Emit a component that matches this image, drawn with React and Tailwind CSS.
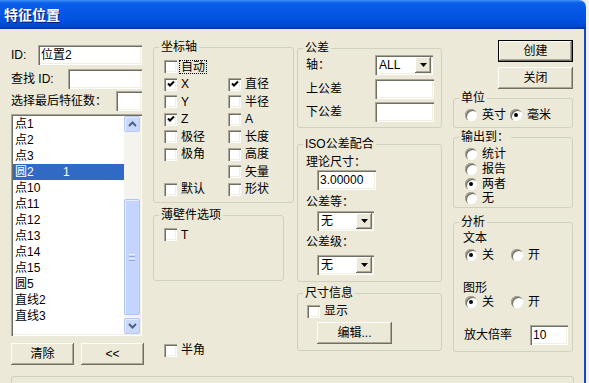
import React from "react";

const sunken =
  "bg-white shadow-[inset_1px_1px_0_#aca899,inset_2px_2px_0_#716f64,inset_-1px_-1px_0_#ffffff,inset_-2px_-2px_0_#f1efe2]";
const raised =
  "bg-[#ece9d8] shadow-[inset_-1px_-1px_0_#716f64,inset_1px_1px_0_#ffffff,inset_-2px_-2px_0_#aca899]";

function Group({ title, className = "", children }) {
  return (
    <fieldset className={`border border-[#d0d0bf] rounded-[3px] ${className}`}>
      <legend className="ml-[5px] px-[2px] leading-[13px]">{title}</legend>
      {children}
    </fieldset>
  );
}

function Check({ checked }) {
  return (
    <span className={`w-[13px] h-[13px] shrink-0 flex items-center justify-center ${sunken}`}>
      {checked && (
        <svg width="8" height="8" viewBox="0 0 8 8">
          <path d="M1 3.5L3 5.5L7 1.5" stroke="#000" strokeWidth="2" fill="none" />
        </svg>
      )}
    </span>
  );
}

function CheckRow({ label, checked, focus, className = "" }) {
  return (
    <div className={`flex items-center h-[17.5px] ${className}`}>
      <Check checked={checked} />
      {label && (
        <span
          className={`ml-[3px] leading-[12px] px-[1px] ${
            focus ? "outline outline-1 outline-dotted outline-black" : ""
          }`}
        >
          {label}
        </span>
      )}
    </div>
  );
}

function Radio({ checked }) {
  return (
    <span className="w-[12px] h-[12px] rounded-full bg-white shrink-0 flex items-center justify-center shadow-[inset_1px_1px_0_#aca899,inset_2px_2px_0_#716f64,inset_-1px_-1px_0_#ffffff]">
      {checked && <span className="w-[4px] h-[4px] rounded-full bg-black" />}
    </span>
  );
}

function RadioItem({ label, checked, className = "" }) {
  return (
    <div className={`flex items-center ${className}`}>
      <Radio checked={checked} />
      <span className="ml-[5px] leading-[14px]">{label}</span>
    </div>
  );
}

function Field({ value = "", className = "" }) {
  return (
    <div className={`h-[20px] flex items-center pl-[3px] ${sunken} ${className}`}>
      <span className="leading-[14px]">{value}</span>
    </div>
  );
}

function Combo({ value, className = "" }) {
  return (
    <div className={`flex items-center h-[20px] p-[2px] ${sunken} ${className}`}>
      <span className="flex-1 pl-[2px] leading-[14px]">{value}</span>
      <span className={`w-[16px] h-full flex items-center justify-center ${raised}`}>
        <svg width="7" height="4" viewBox="0 0 7 4">
          <path d="M0 0H7L3.5 4Z" fill="#000" />
        </svg>
      </span>
    </div>
  );
}

function Button({ children, isDefault, className = "" }) {
  return (
    <div
      className={`flex items-center justify-center h-[22px] ${
        isDefault ? "border border-black" : ""
      } ${raised} ${className}`}
    >
      <span className="leading-[14px]">{children}</span>
    </div>
  );
}

function ScrollBtn({ up }) {
  return (
    <div className="w-[16px] h-[16px] rounded-[2px] border border-[#b7c8f2] bg-[#c9d8fc] flex items-center justify-center shadow-[inset_1px_1px_0_#e4ecfe]">
      <svg width="9" height="6" viewBox="0 0 9 6">
        <path
          d={up ? "M1 5L4.5 1.5L8 5" : "M1 1L4.5 4.5L8 1"}
          stroke="#4d6185"
          strokeWidth="2"
          fill="none"
        />
      </svg>
    </div>
  );
}

const items = ["点1", "点2", "点3", "圆2", "点10", "点11", "点12", "点13", "点14", "点15", "圆5", "直线2", "直线3"];

export default function App() {
  return (
    <div className="w-[589px] h-[383px] flex bg-[#e9e9e9] text-[12px] text-black font-['Liberation_Sans','Noto_Sans_CJK_SC',sans-serif] overflow-hidden">
      <div className="w-[586px] flex flex-col">
        {/* title bar */}
        <div className="h-[29px] rounded-tr-[7px] flex items-center pl-[4px] bg-[linear-gradient(to_bottom,#3d8ff8_0px,#0b5fe9_3px,#0557e4_12px,#0050dd_22px,#0044c8_27px,#00309e_29px)]">
          <span className="text-white font-bold text-[14px] leading-[16px] [text-shadow:1px_1px_0_#0a1b6e]">
            特征位置
          </span>
        </div>

        {/* body */}
        <div className="flex-1 flex flex-col bg-[#ece9d8] border-r-2 border-[#1a47c8]">
          <div className="h-[347px] flex items-start pl-[11px]">
            {/* column 1 */}
            <div className="w-[133px] mt-[16px] flex flex-col">
              <div className="w-[131px] flex items-center h-[20px]">
                <span className="flex-1 leading-[14px]">ID:</span>
                <Field value="位置2" className="w-[104px]" />
              </div>
              <div className="w-[131px] flex items-center h-[20px] mt-[4px]">
                <span className="flex-1 leading-[14px]">查找 ID:</span>
                <Field className="w-[74px]" />
              </div>
              <div className="w-[131px] flex items-center h-[20px] mt-[2px]">
                <span className="flex-1 leading-[14px]">选择最后特征数：</span>
                <Field className="w-[26px]" />
              </div>

              <div className={`w-[131px] h-[222px] mt-[3px] p-[2px] flex ${sunken}`}>
                <div className="flex-1 flex flex-col">
                  {items.map((it, i) => (
                    <div
                      key={it}
                      className={`h-[16px] flex items-center pl-[2px] leading-[14px] ${
                        i === 3 ? "bg-[#316ac5] text-white" : ""
                      }`}
                    >
                      <span className="w-[48px]">{it}</span>
                      {i === 3 && <span>1</span>}
                    </div>
                  ))}
                </div>
                <div className="w-[16px] flex flex-col bg-[#f4f3ee]">
                  <ScrollBtn up />
                  <div className="h-[67px]" />
                  <div className="h-[116px] rounded-[2px] border border-[#b1c5f3] bg-[#c4d4fc] shadow-[inset_1px_1px_0_#e6edfe] flex flex-col items-center justify-center gap-[1px]">
                    <span className="w-[6px] h-[1px] bg-[#eef3fe]" />
                    <span className="w-[6px] h-[1px] bg-[#8faaee]" />
                    <span className="w-[6px] h-[1px] bg-[#eef3fe]" />
                    <span className="w-[6px] h-[1px] bg-[#8faaee]" />
                  </div>
                  <div className="h-[3px]" />
                  <ScrollBtn />
                </div>
              </div>

              <div className="flex mt-[7px] gap-[7px]">
                <Button className="w-[63px]">清除</Button>
                <Button className="w-[63px]">&lt;&lt;</Button>
              </div>
            </div>

            {/* column 2 */}
            <div className="w-[141px] ml-[9px] mt-[12px] flex flex-col">
              <Group title="坐标轴" className="w-[141px] h-[162px]">
                <div className="pt-[4px] pl-[10px] grid grid-cols-[64px_1fr]">
                  <CheckRow label="自动" focus />
                  <div />
                  <CheckRow label="X" checked />
                  <CheckRow label="直径" checked />
                  <CheckRow label="Y" />
                  <CheckRow label="半径" />
                  <CheckRow label="Z" checked />
                  <CheckRow label="A" />
                  <CheckRow label="极径" />
                  <CheckRow label="长度" />
                  <CheckRow label="极角" />
                  <CheckRow label="高度" />
                  <div />
                  <CheckRow label="矢量" />
                  <CheckRow label="默认" />
                  <CheckRow label="形状" />
                </div>
              </Group>
              <Group title="薄壁件选项" className="w-[131px] h-[72px] mt-[6px]">
                <div className="pt-[4px] pl-[10px]">
                  <CheckRow label="T" />
                </div>
              </Group>
              <div className="mt-[60px] pl-[11px] h-[18px] flex items-center">
                <Check />
                <span className="ml-[4px] leading-[14px]">半角</span>
              </div>
            </div>

            {/* column 3 */}
            <div className="w-[145px] ml-[3px] mt-[13px] flex flex-col">
              <Group title="公差" className="w-[145px] h-[86px]">
                <div className="flex items-center h-[19px] pl-[8px]">
                  <span className="w-[69px] leading-[14px]">轴：</span>
                  <Combo value="ALL" className="w-[58px] h-[19px]" />
                </div>
                <div className="flex items-center h-[20px] mt-[5px] pl-[8px]">
                  <span className="w-[69px] leading-[14px]">上公差</span>
                  <Field className="w-[59px]" />
                </div>
                <div className="flex items-center h-[20px] mt-[3px] pl-[8px]">
                  <span className="w-[69px] leading-[14px]">下公差</span>
                  <Field className="w-[59px]" />
                </div>
              </Group>

              <Group title="ISO公差配合" className="w-[145px] h-[144px] mt-[10px]">
                <div className="flex flex-col pt-[4px] pl-[8px]">
                  <span className="leading-[14px]">理论尺寸：</span>
                  <Field value="3.00000" className="w-[59px] ml-[11px] mt-[1px]" />
                  <span className="leading-[14px] mt-[5px]">公差等：</span>
                  <Combo value="无" className="w-[57px] ml-[11px] mt-[2px]" />
                  <span className="leading-[14px] mt-[4px]">公差级：</span>
                  <Combo value="无" className="w-[57px] ml-[11px] mt-[6px]" />
                </div>
              </Group>

              <Group title="尺寸信息" className="w-[145px] h-[64px] mt-[5px]">
                <div className="flex flex-col pt-[4px] pl-[9px]">
                  <div className="flex items-center h-[14px]">
                    <Check />
                    <span className="ml-[4px] leading-[14px]">显示</span>
                  </div>
                  <Button className="w-[75px] ml-[10px] mt-[4px]">编辑...</Button>
                </div>
              </Group>
            </div>

            {/* column 4 */}
            <div className="w-[120px] ml-[11px] mt-[11px] flex flex-col">
              <Button isDefault className="w-[75px] ml-[45px]">创建</Button>
              <Button className="w-[75px] ml-[45px] mt-[5px]">关闭</Button>

              <Group title="单位" className="w-[120px] h-[36px] mt-[3px]">
                <div className="flex items-center h-[14px] mt-[3px] pl-[11px]">
                  <RadioItem label="英寸" className="w-[45px]" />
                  <RadioItem label="毫米" checked />
                </div>
              </Group>

              <Group title="输出到：" className="w-[120px] h-[77px] mt-[3px]">
                <div className="flex flex-col pt-[3px] pl-[11px]">
                  <RadioItem label="统计" className="h-[14.7px]" />
                  <RadioItem label="报告" className="h-[14.7px]" />
                  <RadioItem label="两者" checked className="h-[14.7px]" />
                  <RadioItem label="无" className="h-[14.7px]" />
                </div>
              </Group>

              <Group title="分析" className="w-[120px] h-[136px] mt-[8px]">
                <div className="flex flex-col pt-[2px]">
                  <span className="leading-[14px] pl-[9px]">文本</span>
                  <div className="flex items-center h-[14px] mt-[3px] pl-[11px]">
                    <RadioItem label="关" checked className="w-[46px]" />
                    <RadioItem label="开" />
                  </div>
                  <span className="leading-[14px] pl-[9px] mt-[19px]">图形</span>
                  <div className="flex items-center h-[14px] pl-[11px]">
                    <RadioItem label="关" checked className="w-[46px]" />
                    <RadioItem label="开" />
                  </div>
                  <div className="flex items-center h-[20px] mt-[16px] pl-[10px]">
                    <span className="w-[66px] leading-[14px]">放大倍率</span>
                    <Field value="10" className="w-[38px]" />
                  </div>
                </div>
              </Group>
            </div>
          </div>

          <div className="mx-[11px] w-[563px] flex-1 border-t border-x border-[#d0d0bf] rounded-t-[3px]" />
        </div>
      </div>
      <div className="flex-1 bg-[#f2f2f2]" />
    </div>
  );
}
